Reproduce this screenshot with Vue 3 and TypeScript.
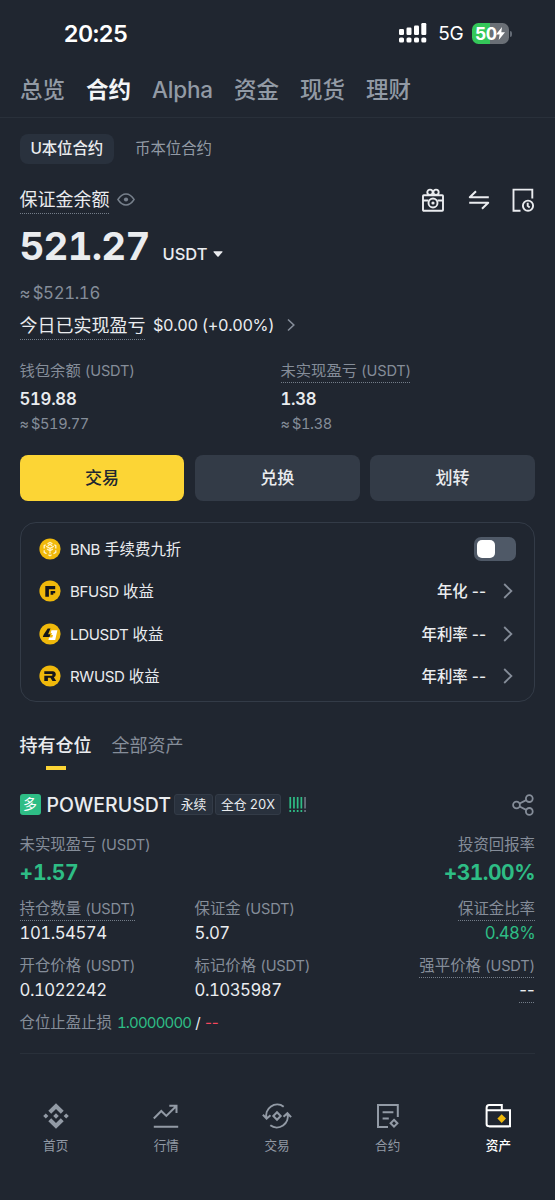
<script setup lang="ts">
interface Earn { id: string; coin: string; text: string; rate?: string }
interface Cell { label: string; unit?: string; value: string; dotted?: boolean; dottedValue?: boolean; tone?: string }

const mainTabs: string[] = ['总览', '合约', 'Alpha', '资金', '现货', '理财']
const earns: Earn[] = [
  { id: 'bnb', coin: 'BNB', text: '手续费九折' },
  { id: 'bfusd', coin: 'BFUSD', text: '收益', rate: '年化 --' },
  { id: 'ldusdt', coin: 'LDUSDT', text: '收益', rate: '年利率 --' },
  { id: 'rwusd', coin: 'RWUSD', text: '收益', rate: '年利率 --' },
]
const cells: Cell[] = [
  { label: '持仓数量', unit: '(USDT)', value: '101.54574', dotted: true },
  { label: '保证金', unit: '(USDT)', value: '5.07' },
  { label: '保证金比率', value: '0.48%', dotted: true, tone: 'green' },
  { label: '开仓价格', unit: '(USDT)', value: '0.1022242' },
  { label: '标记价格', unit: '(USDT)', value: '0.1035987' },
  { label: '强平价格', unit: '(USDT)', value: '--', dotted: true, dottedValue: true, tone: 'empty' },
]
const navs: string[] = ['首页', '行情', '交易', '合约', '资产']
</script>

<template>
  <div class="screen">
    <header class="status">
      <span class="clock">20:25</span>
      <div class="status-right">
        <svg class="signal" width="28" height="22" viewBox="0 0 28 22" fill="#fff">
          <rect x="0" y="7" width="5" height="6" rx="1.2" /><rect x="7.5" y="5.5" width="5" height="7.500" rx="1.2" />
          <rect x="15" y="3.500" width="5" height="9.500" rx="1.2" /><rect x="22.300" y="1" width="5" height="12" rx="1.2" />
          <rect x="0" y="15.500" width="5" height="5" rx="1.6" /><rect x="7.5" y="15.500" width="5" height="5" rx="1.6" />
          <rect x="15" y="15.500" width="5" height="5" rx="1.6" /><rect x="22.300" y="15.500" width="5" height="5" rx="1.6" />
        </svg>
        <span class="net">5G</span>
        <div class="battery">
          <span>50</span>
          <svg width="9" height="13" viewBox="0 0 9 13"><path d="M6 0 0 7.400h3.600L2.700 13 9 5.300H5.300z" fill="#fff" /></svg>
        </div>
        <i class="battery-cap"></i>
      </div>
    </header>

    <nav class="main-tabs">
      <span v-for="(t, i) in mainTabs" :key="t" :class="{ on: i === 1, latin: i === 2 }">{{ t }}</span>
    </nav>

    <main class="body">
      <div class="sub-tabs">
        <span class="pill">U本位合约</span>
        <span class="plain">币本位合约</span>
      </div>

      <div class="balance-head">
        <span class="balance-label dotted">保证金余额</span>
        <svg class="eye" width="18" height="13" viewBox="0 0 18 13" fill="none" stroke="#77808c" stroke-width="1.4">
          <path d="M.9 6.500Q4.500 1 9 1t8.100 5.500Q13.500 12 9 12T.9 6.500z" /><circle cx="9" cy="6.500" r="2.100" fill="#77808c" stroke="none" />
        </svg>
        <div class="tools">
          <svg width="24" height="24" viewBox="0 0 24 24" fill="none" stroke="#eaecef" stroke-width="1.900">
            <rect x="2" y="7.200" width="20" height="15.600" rx=".8" /><path d="M2 12.500h5.500M16.500 12.500H22" />
            <circle cx="9" cy="4.300" r="2.700" /><circle cx="15" cy="4.300" r="2.700" />
            <circle cx="12" cy="15" r="4.500" /><circle cx="12" cy="15" r="1.600" fill="#eaecef" stroke="none" />
          </svg>
          <svg width="22" height="20" viewBox="0 0 22 20" fill="none" stroke="#eaecef" stroke-width="2" stroke-linejoin="round">
            <path d="M20.800 7.300H1.800L8 1.200M1.200 12.700h19l-6.200 6.100" />
          </svg>
          <svg width="23" height="24" viewBox="0 0 23 24" fill="none" stroke="#eaecef" stroke-width="1.900">
            <path d="M8.500 22.700H1.500V1.600h18.800v9" /><circle cx="16" cy="17.700" r="5.100" /><path d="M15.700 14.800v3.100l2 1.600" />
          </svg>
        </div>
      </div>

      <div class="amount">
        <span class="big">521.27</span><span class="cur">USDT</span>
        <svg width="10" height="6" viewBox="0 0 10 6"><path d="M.9.300h8.200q.8.300.2 1L5.600 5.500q-.6.500-1.200 0L.7 1.300Q.1.600.9.300z" fill="#eaecef" /></svg>
      </div>
      <div class="approx">≈ <b>$521.16</b></div>
      <div class="pnl">
        <span class="pnl-label dotted">今日已实现盈亏</span>
        <span class="pnl-value">$0.00 (+0.00%)</span>
        <svg width="8" height="14" viewBox="0 0 8 14" fill="none" stroke="#858d99" stroke-width="1.600"><path d="M1 1.500 6.800 7 1 12.500" /></svg>
      </div>

      <div class="stats">
        <div>
          <div class="stat-label"><span>钱包余额 <i>(USDT)</i></span></div>
          <div class="stat-value">519.88</div>
          <div class="stat-approx">≈ <b>$519.77</b></div>
        </div>
        <div>
          <div class="stat-label"><span class="dotted">未实现盈亏 <i>(USDT)</i></span></div>
          <div class="stat-value">1.38</div>
          <div class="stat-approx">≈ <b>$1.38</b></div>
        </div>
      </div>

      <div class="actions">
        <button class="primary">交易</button><button>兑换</button><button>划转</button>
      </div>

      <section class="card">
        <div v-for="e in earns" :key="e.id" class="earn">
          <svg class="coin" width="22" height="22" viewBox="0 0 22 22">
            <circle cx="11" cy="11" r="10.600" fill="#f0b90b" />
            <g v-if="e.id === 'bnb'" fill="none" stroke="#fff3c8" stroke-width="1.300">
              <path d="M8.500 5.800 11 4.400l2.500 1.400M15.300 6.800l1.500.9v2.800M16.800 12.200v2.100l-2.300 1.400M12.600 16.800 11 17.700l-1.600-.9M7.500 15.700l-2.300-1.400v-2.100M5.200 10.500V7.700l1.500-.9" />
              <path d="M7.200 8.300 11 10.400l3.800-2.100M11 10.400v5M8 11l3 1.700L14 11M8.800 7.600 11 6.500l2.200 1.100" />
            </g>
            <path v-else-if="e.id === 'bfusd'" d="M6.300 6h9.900v3.300H9.900v7.400H6.300zM11.600 11.100h4.600v2.200h-1.900v1.400h-2.700z" fill="#14151a" />
            <g v-else-if="e.id === 'ldusdt'">
              <path d="M8.700 5.600h2.800L9.100 11.200h2.300l-.9 2.900H3.800l.9-2.700z" fill="#14151a" />
              <path d="M12.500 7.200h5.900l-2.200 9.700H9.400l.7-2.300h3.200l.7-2.500h-1.700l.7-2.100h-1.300z" fill="#fff" />
            </g>
            <path v-else d="M5.300 6.300h8.400q3.100.2 3.100 3.200 0 2-1.900 2.800l2.300 3.700h-3.700l-2.100-3.300h-2.500V16H5.300v-5.300h7.400q.8-.1.800-.9t-.8-.8H5.300z" fill="#14151a" />
          </svg>
          <span class="earn-name"><i>{{ e.coin }}</i> {{ e.text }}</span>
          <template v-if="e.rate">
            <span class="rate">{{ e.rate }}</span>
            <svg class="chev" width="10" height="16" viewBox="0 0 10 16" fill="none" stroke="#858d99" stroke-width="1.800"><path d="M1.200 1 8.400 8l-7.200 7" /></svg>
          </template>
          <span v-else class="toggle"><i></i></span>
        </div>
      </section>

      <div class="pos-tabs"><span class="on">持有仓位</span><span>全部资产</span></div>

      <section class="position">
        <div class="pair">
          <span class="side">多</span>
          <span class="symbol">POWERUSDT</span>
          <span class="tag perp">永续</span><span class="tag cross">全仓 20X</span>
          <svg class="risk" width="18" height="16" viewBox="0 0 18 16">
            <g v-for="n in 5" :key="n" :fill="n === 5 ? '#6c7480' : '#2ebd85'">
              <rect :x="(n - 1) * 3.700 + .4" y="0" width="1.700" height="11.500" /><rect :x="(n - 1) * 3.700 + .4" y="13" width="1.700" height="2" />
            </g>
          </svg>
          <svg class="share" width="22" height="22" viewBox="0 0 22 22" fill="none" stroke="#858d99" stroke-width="1.800">
            <circle cx="4.500" cy="11" r="3.400" /><circle cx="17.300" cy="4.600" r="3.400" /><circle cx="17.300" cy="17.400" r="3.400" /><path d="m7.600 9.500 6.600-3.400M7.600 12.500l6.600 3.400" />
          </svg>
        </div>
        <div class="result">
          <div><div class="label"><span>未实现盈亏 <i>(USDT)</i></span></div><div class="gain">+1.57</div></div>
          <div class="right"><div class="label"><span>投资回报率</span></div><div class="gain pct">+31.00%</div></div>
        </div>
        <div class="grid">
          <div v-for="c in cells" :key="c.label">
            <div class="label"><span :class="{ dotted: c.dotted }">{{ c.label }} <i v-if="c.unit">{{ c.unit }}</i></span></div>
            <div class="value" :class="c.tone"><span :class="{ dotted: c.dottedValue }">{{ c.value }}</span></div>
          </div>
        </div>
        <div class="tpsl">仓位止盈止损 <span class="green">1.0000000</span> <span class="white">/</span> <span class="red">--</span></div>
      </section>
    </main>

    <footer class="nav">
      <div v-for="(n, i) in navs" :key="n" :class="{ on: i === 4 }">
        <svg width="30" height="28" viewBox="0 0 30 28" fill="none" stroke="#929aa5" stroke-width="2">
          <g v-if="i === 0" fill="#929aa5" stroke="none">
            <path d="m15 1.200 7.700 7.600-2.900 2.900L15 7l-4.800 4.700-2.900-2.900zM15 26.800l7.700-7.600-2.900-2.900L15 21l-4.800-4.700-2.900 2.900zM15 11.200l2.800 2.800-2.800 2.800-2.800-2.800zM4.800 11.400 7.400 14l-2.600 2.600L2.200 14zM25.200 11.400l2.600 2.600-2.600 2.600-2.600-2.600z" />
          </g>
          <path v-else-if="i === 1" d="M2.800 16.500 10.300 9l5 4.900 9.800-9.700M18.300 3.700h7.200v7.200M2.800 24.800h24.400" />
          <g v-else-if="i === 2" stroke-width="2">
            <path d="M21.700 4.700A11 11 0 0 0 4.600 16.500M.9 12.800l3.700 3.900 3.900-3.500M8.300 23.300A11 11 0 0 0 25.400 11.500M21.500 14.800l3.900-3.600 3.700 3.900" />
            <path d="m15 10.200 3.700 3.800-3.700 3.800-3.700-3.800z" />
          </g>
          <g v-else-if="i === 3">
            <path d="M15 25H5V3h19.800v12M9.600 10.300h10.800M9.600 16.600h6.200" /><path d="m21 17.800 3.400 3.400-3.400 3.400-3.400-3.400z" />
          </g>
          <g v-else stroke="#fff">
            <path d="M27 8.200v16H6.200Q3.600 24.200 3.600 22V5.900Q3.600 3 6.200 3h12.600v5M3.600 8.200H27v14.900q0 1.500-1.500 1.500H6.200" />
            <path d="m18.700 12.300 4.300 4.300-4.300 4.300-4.300-4.300z" fill="#f0b90b" stroke="none" />
          </g>
        </svg>
        <span>{{ n }}</span>
      </div>
    </footer>
  </div>
</template>

<style>
body { margin: 0; background: #202630; }
</style>

<style scoped>
* { box-sizing: border-box; }
i { font-style: normal; }
b { font-weight: inherit; }
.screen { width: 555px; height: 1200px; overflow: hidden; display: flex; flex-direction: column; background: #202630; color: #eaecef; font-family: Inter, "Noto Sans CJK SC", sans-serif; font-variant-numeric: tabular-nums; white-space: nowrap; }
.status { height: 64px; display: flex; justify-content: space-between; padding: 0 43px 0 63.500px; }
.clock { font-size: 23.500px; font-weight: 600; line-height: 68px; color: #fff; letter-spacing: -.6px; }
.status-right { display: flex; align-items: center; height: 67px; }
.signal { margin: -1px 11px 0 0; }
.net { font-size: 19px; line-height: 68px; color: #fff; letter-spacing: -.7px; width: 24px; margin-right: 10px; }
.battery { width: 37px; height: 21px; border-radius: 6.500px; background: linear-gradient(90deg, #34c759 50%, #6a6f76 50%); display: flex; align-items: center; padding-left: 3px; color: #fff; }
.battery span { font-size: 17.500px; font-weight: 700; letter-spacing: -.6px; line-height: 21px; }
.battery-cap { width: 2px; height: 6px; border-radius: 0 2px 2px 0; background: #646b75; margin-left: 1px; }
.main-tabs { height: 54px; display: flex; gap: 21px; padding: 0 20px; border-bottom: 1px solid #29303a; font-size: 22.500px; line-height: 52px; font-weight: 500; color: #929aa5; }
.main-tabs .on { color: #f3f5f7; font-weight: 600; }
.main-tabs .latin { letter-spacing: -.2px; }
.body { padding: 0 20px 0 19.500px; height: 975px; }
.dotted { background: repeating-linear-gradient(90deg, #747d89 0 1px, transparent 1px 2px) left bottom / 100% 1px no-repeat; }
.sub-tabs { margin-top: 16px; height: 30px; display: flex; gap: 21px; line-height: 29px; font-size: 15.400px; }
.pill { width: 94.500px; text-align: center; border-radius: 8px; background: #29313d; font-weight: 500; letter-spacing: -.05px; }
.plain { color: #929aa5; }
.balance-head { margin-top: 20px; height: 30px; display: flex; align-items: center; }
.balance-label { font-size: 18px; line-height: 31px; height: 30px; }
.eye { margin: 1px 0 0 7.500px; }
.tools { margin-left: auto; display: flex; align-items: center; gap: 22.500px; padding-top: 1px; }
.amount { height: 64px; display: flex; align-items: baseline; }
.big { font-size: 38.500px; line-height: 64px; font-weight: 700; width: 143px; letter-spacing: -.8px; }
.cur { font-size: 16.500px; font-weight: 500; }
.amount svg { margin-left: 5.500px; position: relative; top: -3px; }
.approx { height: 30px; line-height: 30px; font-size: 16.800px; color: #858d99; word-spacing: -1.500px; letter-spacing: -.35px; }
.pnl { display: flex; align-items: center; height: 31px; margin-top: 1px; }
.pnl-label { font-size: 18px; line-height: 32px; height: 30px; }
.pnl-value { font-size: 16.300px; line-height: 34px; margin-left: 7.500px; width: 134px; letter-spacing: -.35px; padding-top: 1px; }
.stats { display: grid; grid-template-columns: 261px 1fr; margin-top: 17px; }
.stat-label { height: 26px; line-height: 27px; font-size: 15.300px; color: #858d99; }
.stat-label span, .label span, .value span { display: inline-block; height: 100%; vertical-align: top; }
.stat-value { height: 30px; line-height: 32px; font-size: 16.700px; font-weight: 600; letter-spacing: -.25px; }
.stat-approx { height: 20px; line-height: 22px; font-size: 14.600px; color: #858d99; word-spacing: -1px; letter-spacing: -.4px; }
.actions { margin-top: 22px; display: grid; grid-template-columns: repeat(3, 1fr); gap: 10.500px; }
button { height: 46px; border: 0; border-radius: 8px; background: #333b47; color: #eaecef; font: 500 17px/45px Inter, "Noto Sans CJK SC", sans-serif; padding: 0; }
.primary { background: #fcd535; color: #202630; }
.card { margin-top: 21px; height: 180px; border: 1.500px solid #333b47; border-radius: 16px; padding: 5px 18px 0; }
.earn { display: flex; align-items: center; height: 42.300px; font-size: 15.400px; }
.earn-name, .rate { padding-bottom: 2px; }
.earn-name { margin-left: 9.500px; }
.earn-name i { font-size: 15.100px; letter-spacing: -.35px; }
.rate { margin-left: auto; font-weight: 500; font-variant-numeric: normal; }
.chev { margin: 0 3px 0 17px; }
.toggle { margin-left: auto; width: 42px; height: 24px; border-radius: 7px; background: #4f5967; padding: 3px; }
.toggle i { display: block; width: 18px; height: 18px; border-radius: 5px; background: #fff; }
.pos-tabs { display: flex; gap: 20px; height: 70px; margin-top: 24px; font-size: 18px; line-height: 40px; color: #858d99; }
.pos-tabs .on { color: #eaecef; font-weight: 500; display: flex; flex-direction: column; align-items: center; }
.pos-tabs .on::after { content: ""; width: 20px; height: 4px; background: #fcd535; }
.pair { display: flex; align-items: center; height: 21px; margin-top: -2px; }
.side { width: 21px; height: 21px; border-radius: 3px; background: #2ebd85; color: #fff; font-size: 14px; line-height: 20px; text-align: center; }
.symbol { margin-left: 6px; width: 127.500px; font-size: 19.500px; font-weight: 500; }
.tag { height: 21px; line-height: 19px; font-size: 12.800px; border: 1px solid #333b47; border-radius: 3px; background: #29313d; text-align: center; }
.perp { width: 39px; }
.cross { width: 66px; margin-left: 2px; letter-spacing: -.1px; }
.risk { margin-left: 8px; }
.share { margin-left: auto; margin-right: 1px; }
.result { display: flex; justify-content: space-between; margin-top: 16px; }
.right { text-align: right; }
.label { height: 26px; line-height: 27px; font-size: 15.400px; color: #858d99; }
.label i, .stat-label i { font-size: 14.600px; letter-spacing: -.2px; }
.gain { height: 32px; line-height: 32px; font-size: 21px; font-weight: 700; color: #2ebd85; letter-spacing: -.2px; }
.pct { letter-spacing: -.5px; }
.grid { display: grid; grid-template-columns: 175px 1fr auto; margin-top: 6px; }
.grid > div { height: 57px; }
.grid > div:nth-child(3n) { text-align: right; }
.value { height: 25px; line-height: 25px; font-size: 16.800px; letter-spacing: -.5px; }
.value.green { letter-spacing: -.7px; }
.value.empty { font-variant-numeric: normal; letter-spacing: .2px; }
.green { color: #2ebd85; }
.red { color: #f6465d; font-variant-numeric: normal; }
.white { color: #eaecef; }
.tpsl { height: 45px; line-height: 28px; font-size: 15.400px; color: #858d99; border-bottom: 1px solid #29303a; }
.tpsl span { font-size: 15px; }
.tpsl .green { letter-spacing: -.85px; margin-left: 1px; }
.nav { display: grid; grid-template-columns: repeat(5, 110.700px); margin: 9px 0 0 .3px; }
.nav div { display: flex; flex-direction: column; align-items: center; font-size: 12.600px; line-height: 20px; color: #929aa5; }
.nav span { margin-top: 6px; }
.nav .on { color: #fff; font-weight: 500; }
</style>
